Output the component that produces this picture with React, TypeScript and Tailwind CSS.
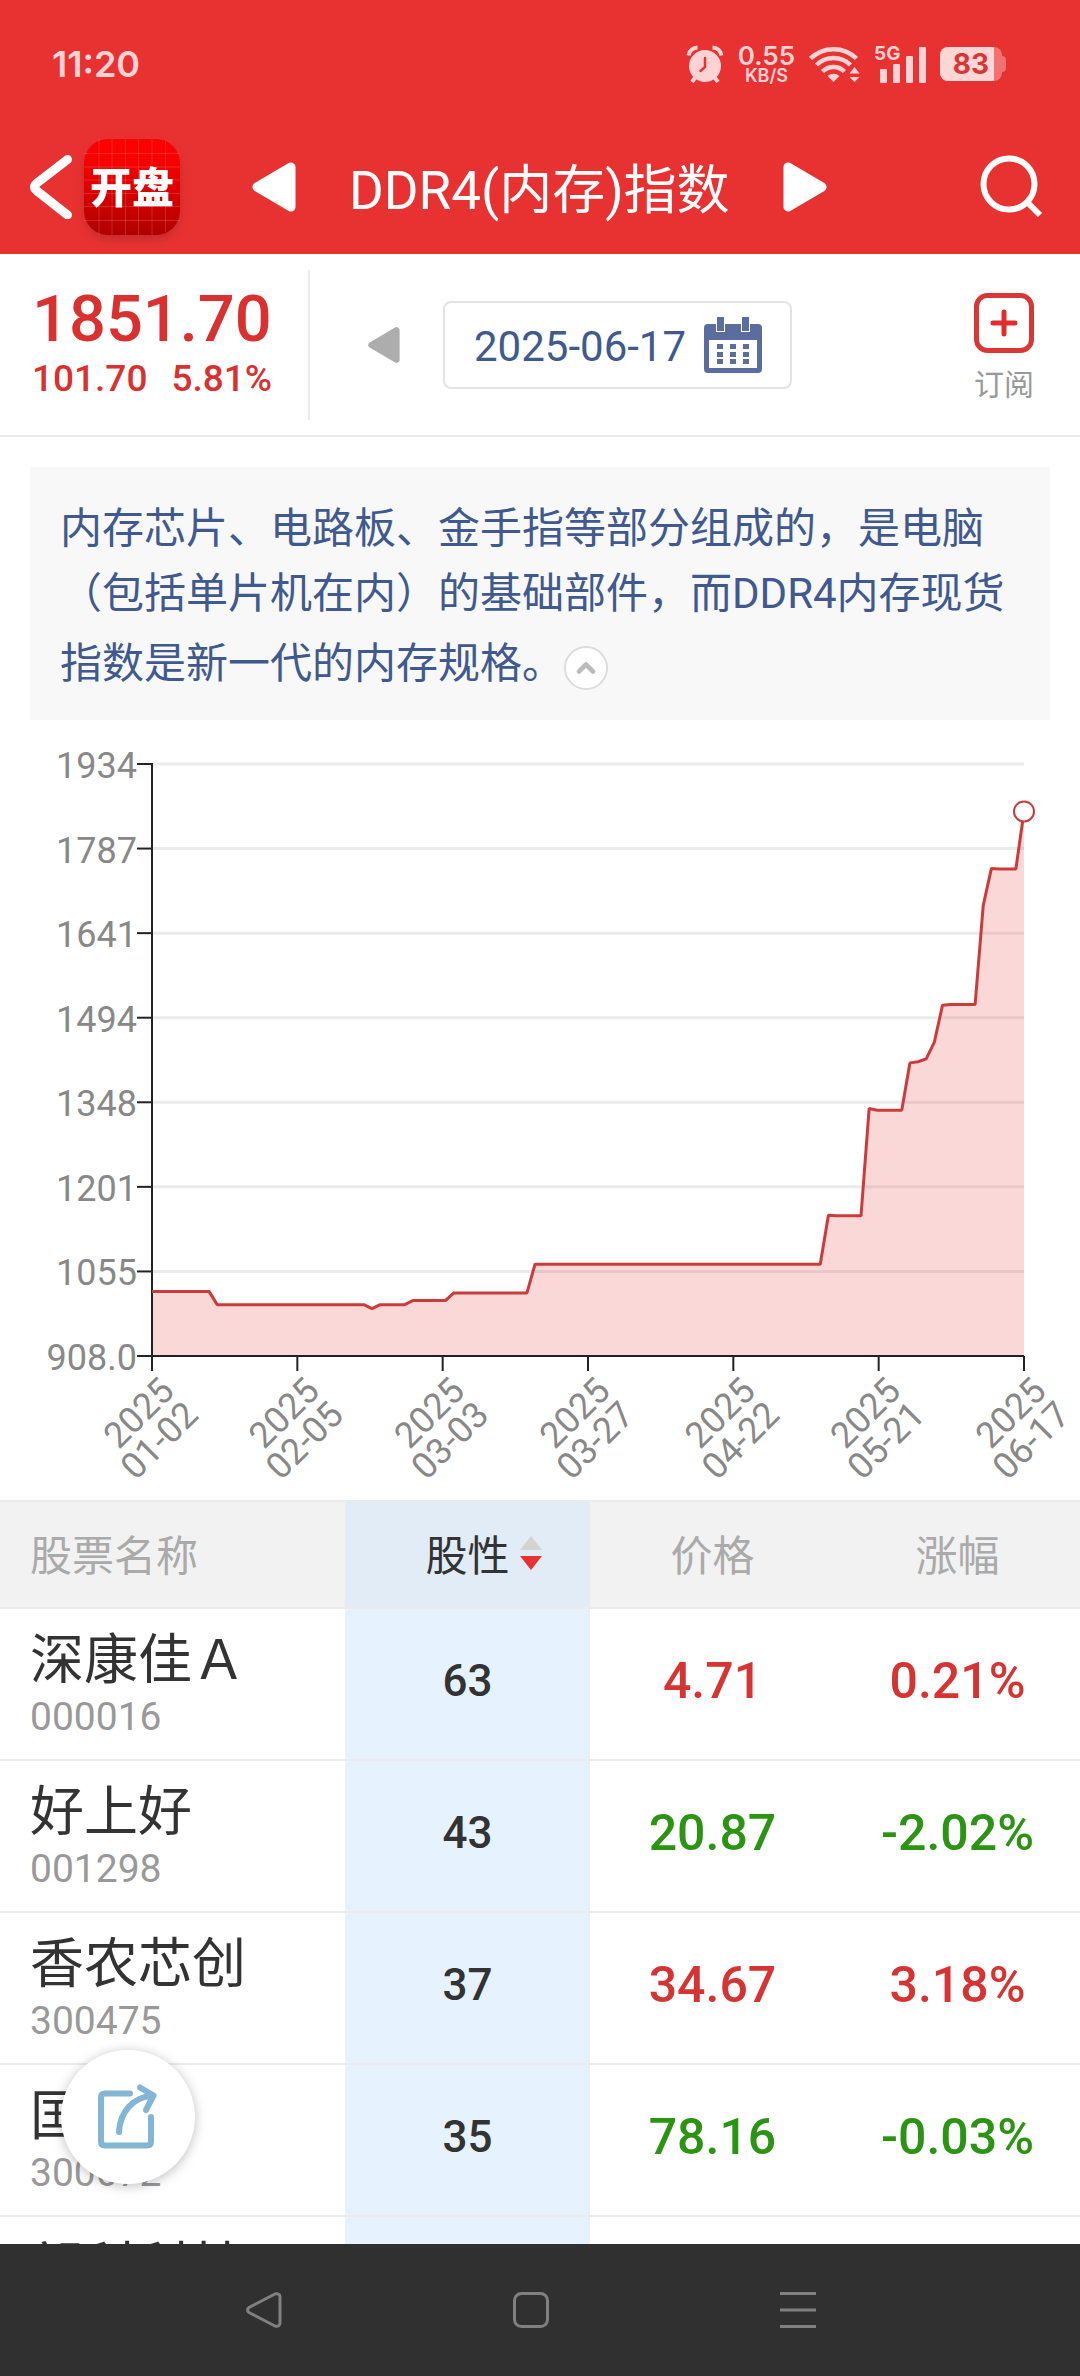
import { ChevronUp } from 'lucide-react';

type Stock = {
    name: string;
    code: string;
    score: number;
    price: string;
    change: string;
};

const stocks: Stock[] = [
    { name: '深康佳Ａ', code: '000016', score: 63, price: '4.71', change: '0.21%' },
    { name: '好上好', code: '001298', score: 43, price: '20.87', change: '-2.02%' },
    { name: '香农芯创', code: '300475', score: 37, price: '34.67', change: '3.18%' },
    { name: '国科微', code: '300672', score: 35, price: '78.16', change: '-0.03%' },
    { name: '朗科科技', code: '300042', score: 33, price: '24.15', change: '1.02%' },
];

// [trading day, index value], only the days where the line bends
const series: [number, number][] = [
    [0, 1020], [7, 1020], [8, 997], [26, 997], [27, 990], [28, 997], [31, 997],
    [32, 1004], [36, 1004], [37, 1017], [46, 1017], [47, 1067], [82, 1067],
    [83, 1152], [84, 1151], [87, 1151], [88, 1337], [89, 1334], [92, 1334],
    [93, 1416], [94, 1418], [95, 1423], [96, 1452], [97, 1516], [98, 1517],
    [101, 1517], [102, 1689], [103, 1753], [104, 1752], [106, 1752], [107, 1851.7],
];

const yLabels = ['1934', '1787', '1641', '1494', '1348', '1201', '1055', '908.0'];
const xLabels = ['01-02', '02-05', '03-03', '03-27', '04-22', '05-21', '06-17'];

const LEFT = 152;
const RIGHT = 1024;
const TOP = 44;
const BOTTOM = 636;

const toX = (day: number) => LEFT + (day / 107) * (RIGHT - LEFT);
const toY = (value: number) => BOTTOM - ((value - 908) / (1934 - 908)) * (BOTTOM - TOP);

function StatusBar() {
    return (
        <div className="flex h-32 items-center justify-between pl-[52px] pr-[74px] text-[#ffd3d3]">
            <span className="font-['Inter',sans-serif] text-[36px] leading-none font-semibold">11:20</span>
            <div className="flex items-center gap-[14px]">
                <svg width="38" height="38" viewBox="0 0 38 38" fill="none" aria-hidden="true">
                    <circle cx="19" cy="21" r="16" fill="currentColor" />
                    <path d="M2.5 10.5C3 6 7 2.500 11.500 2.500M35.500 10.500C35 6 31 2.500 26.500 2.500" stroke="currentColor" strokeWidth="4" />
                    <path d="M9 33l-3 4M29 33l3 4" stroke="currentColor" strokeWidth="4" />
                    <path d="M19 13v9l-4.500 4" stroke="#e83232" strokeWidth="2.500" strokeLinecap="round" />
                </svg>
                <div className="flex flex-col items-center font-['Inter',sans-serif] font-semibold">
                    <span className="text-[26px] leading-6">0.55</span>
                    <span className="text-[18px] leading-4">KB/S</span>
                </div>
                <svg width="51" height="38" viewBox="0 0 51 38" fill="none" aria-hidden="true">
                    <path d="M1.500 13.500A33 33 0 0 1 47.500 13.500M7.500 20A24 24 0 0 1 41.500 20M13.500 26.500A15.500 15.500 0 0 1 35.500 26.500" stroke="currentColor" strokeWidth="4.500" />
                    <path d="M18.500 31a9 9 0 0 1 12 0L24.500 37z" fill="currentColor" />
                    <path d="M45.500 22l5 6.500h-10zM45.500 37l5-5h-10z" fill="currentColor" />
                </svg>
                <div className="relative h-[37px] w-[52px]">
                    <span className="absolute top-0 left-0 font-['Inter',sans-serif] text-[19px] leading-4 font-bold">5G</span>
                    <svg className="absolute right-0 bottom-0" width="46" height="37" viewBox="0 0 46 37" fill="currentColor" aria-hidden="true">
                        <rect x="0" y="23" width="7" height="14" rx="1" />
                        <rect x="13" y="18" width="7" height="19" rx="1" />
                        <rect x="26" y="10" width="7" height="27" rx="1" />
                        <rect x="39" y="1" width="7" height="36" rx="1" />
                    </svg>
                </div>
                <div className="flex items-center">
                    <div className="flex h-[34px] w-[62px] items-center overflow-hidden rounded-lg bg-[#f27272]">
                        <span className="flex h-full w-[54px] items-center justify-center bg-[#fdd6d6] pl-2 font-['Inter',sans-serif] text-[28px] leading-none font-bold text-[#d93636]">83</span>
                    </div>
                    <span className="h-4 w-1 rounded-r-full bg-[#f27272]" />
                </div>
            </div>
        </div>
    );
}

function AppLogo() {
    return (
        <svg className="drop-shadow-lg" width="96" height="96" viewBox="0 0 96 96" role="img" aria-label="开盘">
            <defs>
                <linearGradient id="logo" x1="0" y1="0" x2="0" y2="1">
                    <stop offset="0.150" stopColor="#ff0000" />
                    <stop offset="1" stopColor="#b00000" />
                </linearGradient>
            </defs>
            <rect width="96" height="96" rx="24" fill="url(#logo)" />
            <path
                d="M15 0v96M28 0v96M41.500 0v96M54.500 0v96M68 0v96M81.500 3v90M0 14.500h96M0 28h96M0 41h96M0 54.500h96M0 67.500h96M0 81.500h96"
                stroke="#fff"
                strokeOpacity="0.150"
            />
            <text x="48" y="64" textAnchor="middle" fill="#fff" fontSize="42" className="font-['Noto_Sans_CJK_SC',sans-serif] font-black">开盘</text>
        </svg>
    );
}

function Arrow({ className }: { className: string }) {
    return (
        <svg className={className} viewBox="0 0 44 50" aria-hidden="true">
            <path d="M5 25L39 5v40z" fill="currentColor" stroke="currentColor" strokeWidth="9" strokeLinejoin="round" />
        </svg>
    );
}

function TitleBar() {
    return (
        <div className="flex h-[118px] items-center pr-9 pl-[30px] text-white">
            <button aria-label="返回" className="mr-3">
                <svg width="42" height="64" viewBox="0 0 42 64" fill="none" aria-hidden="true">
                    <path d="M37.500 4.500L7 28q-5 4 0 8L37.500 60" stroke="currentColor" strokeWidth="9" strokeLinecap="round" strokeLinejoin="round" />
                </svg>
            </button>
            <AppLogo />
            <div className="ml-[72px] flex items-center gap-[53px]">
                <button aria-label="上一个"><Arrow className="h-[50px] w-11" /></button>
                <h1 className="pt-2 text-[53px] leading-[64px] font-normal whitespace-nowrap">DDR4(内存)指数</h1>
                <button aria-label="下一个"><Arrow className="h-[50px] w-11 rotate-180" /></button>
            </div>
            <button aria-label="搜索" className="ml-auto">
                <svg width="64" height="64" viewBox="0 0 64 64" fill="none" stroke="currentColor" aria-hidden="true">
                    <circle cx="29" cy="29" r="25.500" strokeWidth="6" />
                    <path d="M47 47l13 13" strokeWidth="6" />
                </svg>
            </button>
        </div>
    );
}

function CalendarIcon() {
    return (
        <svg width="58" height="56" viewBox="0 0 58 56" fill="#5b6c9e" aria-hidden="true">
            <path fillRule="evenodd" d="M4 7h50a4 4 0 0 1 4 4v41a4 4 0 0 1-4 4H4a4 4 0 0 1-4-4V11a4 4 0 0 1 4-4zM5 23v28h48V23z" />
            <path d="M13 0h7v14h-7zM38 0h7v14h-7z" stroke="#fff" strokeWidth="2" paintOrder="stroke" />
            <path d="M13 27h6v5h-6zM26 27h6v5h-6zM39 27h6v5h-6zM13 35h6v5h-6zM26 35h6v5h-6zM39 35h6v5h-6zM13 42h6v5h-6zM26 42h6v5h-6zM39 42h6v5h-6z" />
        </svg>
    );
}

function QuoteBar() {
    return (
        <section className="flex items-center border-b-2 border-[#ebebeb] pt-4 pb-[15px]">
            <div className="flex h-[150px] w-[310px] shrink-0 flex-col border-r-2 border-[#ebebeb] pt-4 pl-8 font-medium text-[#d93030]">
                <span className="text-[65px] leading-[66px]">1851.70</span>
                <div className="flex gap-6 text-[37px] leading-[54px]">
                    <span>101.70</span>
                    <span>5.81%</span>
                </div>
            </div>
            <button aria-label="前一天" className="ml-[58px] text-[#adadad]"><Arrow className="h-10 w-8" /></button>
            <button className="ml-[43px] flex h-[88px] items-center gap-[18px] rounded-lg border-2 border-[#e3e3e3] pr-7 pl-[29px] text-[42px] leading-none text-[#40598f]">
                <span className="pt-1">2025-06-17</span>
                <CalendarIcon />
            </button>
            <button className="mr-[46px] ml-auto flex flex-col items-center gap-3 pt-2 text-[30px] leading-10 text-[#999]">
                <svg width="60" height="60" viewBox="0 0 60 60" fill="none" stroke="#d93636" strokeLinecap="round" aria-hidden="true">
                    <rect x="2.500" y="2.500" width="55" height="55" rx="11" strokeWidth="5" />
                    <path d="M30 19v22M19 30h22" strokeWidth="5" stroke="#e02c2c" />
                </svg>
                订阅
            </button>
        </section>
    );
}

function IndexChart() {
    const line = series.map(([day, value]) => `${toX(day)},${toY(value)}`).join(' ');
    const step = (BOTTOM - TOP) / (yLabels.length - 1);

    return (
        <svg className="block w-full" viewBox="0 0 1080 780" role="img" aria-label="DDR4(内存)指数">
            {yLabels.map((label, i) => (
                <g key={label}>
                    {i < yLabels.length - 1 && (
                        <line x1={LEFT} x2={RIGHT} y1={TOP + i * step} y2={TOP + i * step} stroke="#ebebeb" strokeWidth="3" />
                    )}
                    <line x1={LEFT - 15} x2={LEFT} y1={TOP + i * step} y2={TOP + i * step} stroke="#222" strokeWidth="2" />
                    <text x={LEFT - 15} y={TOP + i * step + 14} textAnchor="end" fontSize="36" fill="#888">{label}</text>
                </g>
            ))}
            <polygon points={`${LEFT},${BOTTOM} ${line} ${RIGHT},${BOTTOM}`} fill="#e83232" fillOpacity="0.190" />
            <path d={`M${LEFT} ${TOP - 1}V${BOTTOM}H${RIGHT}`} fill="none" stroke="#222" strokeWidth="2" />
            <polyline points={line} fill="none" stroke="#cc3b3b" strokeWidth="3" strokeLinejoin="bevel" />
            <circle cx={RIGHT} cy={toY(1851.7)} r="10" fill="#fff" stroke="#cc3b3b" strokeWidth="2" />
            {xLabels.map((label, i) => {
                const x = LEFT + (i * (RIGHT - LEFT)) / (xLabels.length - 1);
                return (
                    <g key={label}>
                        <line x1={x} x2={x} y1={BOTTOM} y2={BOTTOM + 15} stroke="#222" strokeWidth="2" />
                        <g transform={`translate(${x + 24} ${BOTTOM + 37}) rotate(-45)`} textAnchor="end" fontSize="36" fill="#888">
                            <text>2025</text>
                            <text y="34">{label}</text>
                        </g>
                    </g>
                );
            })}
        </svg>
    );
}

function StockTable() {
    return (
        <table className="w-full table-fixed border-collapse border-t-2 border-[#ebebeb]">
            <thead>
                <tr className="h-[107px] border-b-2 border-[#ebebeb] bg-[#f2f2f2] text-[42px] leading-[60px] text-[#aaa]">
                    <th className="w-[345px] pt-1 pl-[30px] text-left font-normal">股票名称</th>
                    <th className="bg-[#e1ecf7] pt-1 font-normal text-[#333]">
                        <button className="relative">
                            股性
                            <svg className="absolute top-2 -right-8" width="22" height="36" viewBox="0 0 22 36" aria-hidden="true">
                                <path d="M11 1l11 14H0z" fill="#d3d3d3" />
                                <path d="M11 35l11-14H0z" fill="#e83232" />
                            </svg>
                        </button>
                    </th>
                    <th className="pt-1 font-normal">价格</th>
                    <th className="pt-1 font-normal">涨幅</th>
                </tr>
            </thead>
            <tbody>
                {stocks.map((stock) => {
                    const color = stock.change.startsWith('-') ? 'text-[#2b9412]' : 'text-[#d63333]';
                    return (
                        <tr key={stock.code} className="h-[152px] border-b-2 border-[#ebebeb] text-center font-medium">
                            <td className="pl-[30px] text-left font-normal">
                                <div className="text-[54px] leading-[66px] whitespace-nowrap text-[#333]">{stock.name}</div>
                                <div className="text-[39px] leading-[46px] text-[#999]">{stock.code}</div>
                            </td>
                            <td className="bg-[#e6f3ff] pb-1.5 text-[44px] leading-[60px] text-[#333]">{stock.score}</td>
                            <td className={`pb-1.5 text-[50px] leading-[60px] ${color}`}>{stock.price}</td>
                            <td className={`pb-1.5 text-[50px] leading-[60px] ${color}`}>{stock.change}</td>
                        </tr>
                    );
                })}
            </tbody>
        </table>
    );
}

function SystemNav() {
    return (
        <nav className="flex h-[132px] shrink-0 items-center justify-between bg-[#303030] pr-[264px] pl-[246px] text-[#808080]">
            <button aria-label="系统返回">
                <svg width="36" height="36" viewBox="0 0 36 36" fill="none" stroke="currentColor" strokeWidth="3" strokeLinejoin="round" aria-hidden="true">
                    <path d="M3 15.500L29 2q5-1 5 3v26q0 4-5 3L3 20.500q-3-2.500 0-5z" />
                </svg>
            </button>
            <button aria-label="主屏幕">
                <svg width="36" height="36" viewBox="0 0 36 36" fill="none" stroke="currentColor" strokeWidth="3" aria-hidden="true">
                    <rect x="1.500" y="1.500" width="33" height="33" rx="7" />
                </svg>
            </button>
            <button aria-label="最近任务">
                <svg width="36" height="36" viewBox="0 0 36 36" fill="none" stroke="currentColor" strokeWidth="3" aria-hidden="true">
                    <path d="M0 1.500h36M0 18h36M0 34.500h36" />
                </svg>
            </button>
        </nav>
    );
}

export default function App() {
    return (
        <div className="flex h-screen flex-col bg-white font-['Roboto','Noto_Sans_CJK_SC',sans-serif]" lang="zh-CN">
            <header className="shrink-0 bg-[#e83232] pb-2">
                <StatusBar />
                <TitleBar />
            </header>

            <div className="relative min-h-0 flex-1 overflow-hidden">
                <QuoteBar />
                <section className="mx-[30px] mt-[30px] bg-[#f8f8f8] px-[30px] pt-[29px] pb-6 text-[42px] leading-[65px] text-[#40598f]">
                    内存芯片、电路板、金手指等部分组成的，是电脑（包括单片机在内）的基础部件，而DDR4内存现货指数是新一代的内存规格。
                    <button
                        aria-label="收起"
                        className="mt-5 inline-flex h-11 w-11 items-center justify-center rounded-full border-2 border-[#dcdcdc] bg-white align-[-4px] text-[#bbb]"
                    >
                        <ChevronUp className="h-7 w-7" strokeWidth={4} />
                    </button>
                </section>
                <IndexChart />
                <StockTable />

                <button
                    aria-label="分享"
                    className="absolute bottom-[60px] left-[61px] flex h-[134px] w-[134px] items-center justify-center rounded-full bg-white shadow-[0_2px_12px_rgba(0,0,0,0.25)]"
                >
                    <svg width="60" height="66" viewBox="0 0 60 66" fill="none" stroke="#82b6d4" strokeWidth="6" strokeLinecap="round" strokeLinejoin="round" aria-hidden="true">
                        <path d="M32 9.500H7q-4 0-4 4v44q0 4 4 4h42q4 0 4-4V33" />
                        <path d="M21 48C22 28 35 13 54 12" />
                        <path d="M42 3.500L55.500 11.500L48 26" />
                    </svg>
                </button>
            </div>

            <SystemNav />
        </div>
    );
}
